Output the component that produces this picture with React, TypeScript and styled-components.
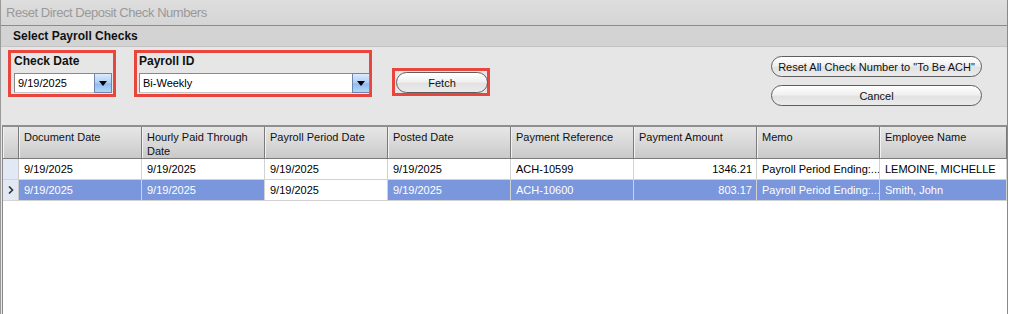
import React from "react";
import styled, { createGlobalStyle, css } from "styled-components";

const Global = createGlobalStyle`
  html, body { margin: 0; padding: 0; background: #ffffff; overflow: hidden; }
  body { font-family: "Liberation Sans", Arial, sans-serif; }
  * { box-sizing: border-box; }
`;

const Window = styled.div`
  width: 1008px;
  height: 314px;
  display: flex;
  flex-direction: column;
  background: #e6e6e6;
  border-left: 1px solid #9a9a9a;
  border-right: 1px solid #8a8a8a;
  font-family: "Liberation Sans", Arial, sans-serif;
  font-size: 11px;
  color: #000;
`;

const TitleBar = styled.div`
  height: 26px;
  flex: none;
  display: flex;
  align-items: center;
  padding-left: 5px;
  font-size: 13px;
  letter-spacing: -0.45px;
  color: #999999;
  background: linear-gradient(#dedede, #d5d5d5);
  border-bottom: 1px solid #8c8c8c;
`;

const SectionHeader = styled.div`
  height: 21px;
  flex: none;
  display: flex;
  align-items: center;
  padding-left: 12px;
  font-size: 12px;
  font-weight: bold;
  color: #111;
  background: #d3d3d3;
  border-bottom: 1px solid #c4c4c4;
`;

const FilterPanel = styled.div`
  height: 78px;
  flex: none;
  display: flex;
  align-items: flex-start;
  padding: 3px 0 0 7px;
  background: #e6e6e6;
`;

const RedBox = styled.div<{ $w: number; $h: number; $ml?: number; $mt?: number }>`
  width: ${(p) => p.$w}px;
  height: ${(p) => p.$h}px;
  margin-left: ${(p) => p.$ml ?? 0}px;
  margin-top: ${(p) => p.$mt ?? 0}px;
  border: 3px solid #e8453c;
  flex: none;
`;

const FieldBox = styled(RedBox)<{ $pl: number }>`
  padding: 0 0 0 ${(p) => p.$pl}px;
  display: flex;
  flex-direction: column;
`;

const FieldLabel = styled.div`
  font-size: 12px;
  font-weight: bold;
  line-height: 16px;
  color: #111;
`;

const ComboBox = styled.div<{ $w: number }>`
  width: ${(p) => p.$w}px;
  height: 20px;
  margin-top: 4px;
  display: flex;
  background: #fff;
  border: 1px solid #8a8a8a;
  border-right: none;
  border-bottom-color: #c8c8c8;
`;

const ComboText = styled.div`
  flex: 1;
  padding-left: 3px;
  line-height: 18px;
  font-size: 11px;
`;

const DropButton = styled.div`
  width: 18px;
  height: 20px;
  margin-top: -1px;
  border: 1px solid #6d87ad;
  background: linear-gradient(#dcebfc, #a9cdf6 50%, #8dbcf1 55%, #b7d6f8);
  display: flex;
  align-items: center;
  justify-content: center;
`;

const Arrow = styled.div`
  width: 0;
  height: 0;
  border-left: 4px solid transparent;
  border-right: 4px solid transparent;
  border-top: 5px solid #000;
  margin-top: 1px;
`;

const pill = css`
  height: 21px;
  border: 1px solid #5e5e5e;
  border-radius: 11px;
  background: linear-gradient(#ffffff, #f0f0f0 45%, #e2e2e2 55%, #ebebeb);
  box-shadow: inset 0 1px 0 #fff;
  font-family: "Liberation Sans", Arial, sans-serif;
  font-size: 11px;
  color: #111;
  display: flex;
  align-items: center;
  justify-content: center;
  padding: 0;
`;

const FetchBox = styled(RedBox)`
  padding: 1px 0 0 1px;
`;

const PillButton = styled.button<{ $w: number }>`
  ${pill};
  width: ${(p) => p.$w}px;
`;

const ActionColumn = styled.div`
  margin-left: auto;
  margin-right: 25px;
  margin-top: 6px;
  display: flex;
  flex-direction: column;
  gap: 8px;
`;

const Grid = styled.div`
  flex: 1;
  margin-left: 1px;
  background: #fff;
  border-top: 2px solid #8e8e8e;
  border-left: 1px solid #8a8a8a;
  display: grid;
  grid-template-columns: 16px repeat(7, 123px) 1fr;
  grid-auto-rows: 21px;
  grid-template-rows: 32px;
  align-content: start;
`;

const HeadCell = styled.div`
  background: linear-gradient(#e6e6e6, #d6d6d6 60%, #c9c9c9);
  border-right: 1px solid #7a7a7a;
  border-bottom: 1px solid #7a7a7a;
  box-shadow: inset 1px 0 0 #f2f2f2;
  padding: 3px 5px 0 5px;
  font-size: 11px;
  line-height: 14px;
  color: #111;
  overflow: hidden;
`;

const RowHead = styled.div`
  background: #e3e9f4;
  border-right: 1px solid #c9c9c9;
  border-bottom: 1px solid #d4d4d4;
  display: flex;
  align-items: center;
  justify-content: center;
`;

const Cell = styled.div<{ $sel?: boolean; $right?: boolean }>`
  background: ${(p) => (p.$sel ? "#7a96dc" : "#ffffff")};
  color: ${(p) => (p.$sel ? "#ffffff" : "#000000")};
  border-right: 1px solid #d2d2d2;
  border-bottom: 1px solid #d2d2d2;
  padding: 0 4px 0 5px;
  display: flex;
  align-items: center;
  justify-content: ${(p) => (p.$right ? "flex-end" : "flex-start")};
  white-space: nowrap;
  overflow: hidden;
  font-size: 11px;
`;

const headers = [
  "Document Date",
  "Hourly Paid Through Date",
  "Payroll Period Date",
  "Posted Date",
  "Payment Reference",
  "Payment Amount",
  "Memo",
  "Employee Name",
];

const rows = [
  {
    cells: ["9/19/2025", "9/19/2025", "9/19/2025", "9/19/2025", "ACH-10599", "1346.21", "Payroll Period Ending:...", "LEMOINE, MICHELLE"],
    selected: false,
  },
  {
    cells: ["9/19/2025", "9/19/2025", "9/19/2025", "9/19/2025", "ACH-10600", "803.17", "Payroll Period Ending:...", "Smith, John"],
    selected: true,
  },
];

const Chevron = () => (
  <svg width="6" height="8" viewBox="0 0 6 8">
    <path d="M1 0.5 L4.5 4 L1 7.5" fill="none" stroke="#333" strokeWidth="1.6" />
  </svg>
);

export default function App() {
  return (
    <>
      <Global />
      <Window>
        <TitleBar>Reset Direct Deposit Check Numbers</TitleBar>
        <SectionHeader>Select Payroll Checks</SectionHeader>
        <FilterPanel>
          <FieldBox $w={108} $h={47} $pl={3}>
            <FieldLabel>Check Date</FieldLabel>
            <ComboBox $w={98}>
              <ComboText>9/19/2025</ComboText>
              <DropButton>
                <Arrow />
              </DropButton>
            </ComboBox>
          </FieldBox>
          <FieldBox $w={238} $h={47} $pl={2} $ml={18}>
            <FieldLabel>Payroll ID</FieldLabel>
            <ComboBox $w={231}>
              <ComboText>Bi-Weekly</ComboText>
              <DropButton>
                <Arrow />
              </DropButton>
            </ComboBox>
          </FieldBox>
          <FetchBox $w={98} $h={28} $ml={20} $mt={18}>
            <PillButton $w={92}>Fetch</PillButton>
          </FetchBox>
          <ActionColumn>
            <PillButton $w={211}>Reset All Check Number to "To Be ACH"</PillButton>
            <PillButton $w={211}>Cancel</PillButton>
          </ActionColumn>
        </FilterPanel>
        <Grid>
          <HeadCell />
          {headers.map((h) => (
            <HeadCell key={h}>{h}</HeadCell>
          ))}
          {rows.map((r, ri) => (
            <React.Fragment key={ri}>
              <RowHead>{r.selected ? <Chevron /> : null}</RowHead>
              {r.cells.map((c, ci) => (
                <Cell key={ci} $sel={r.selected && ci !== 2} $right={ci === 5}>
                  {c}
                </Cell>
              ))}
            </React.Fragment>
          ))}
        </Grid>
      </Window>
    </>
  );
}
